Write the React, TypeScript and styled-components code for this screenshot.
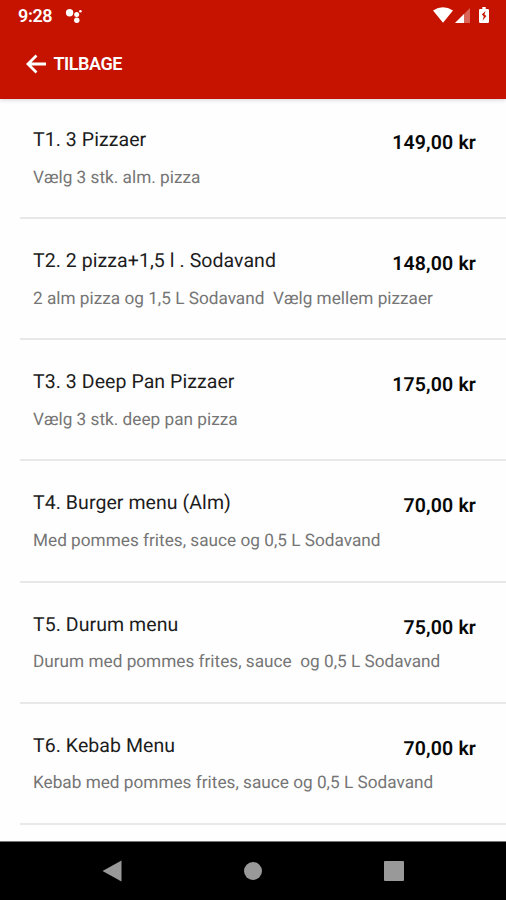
import React from "react";
import styled, { createGlobalStyle } from "styled-components";

const GlobalStyle = createGlobalStyle`
  * { box-sizing: border-box; }
  html, body { margin: 0; padding: 0; background: #fff; }
  body {
    font-family: Roboto, "Liberation Sans", sans-serif;
    text-rendering: geometricPrecision;
    overflow: hidden;
  }
`;

const Screen = styled.div`
  width: 506px;
  height: 900px;
  display: flex;
  flex-direction: column;
  background: #fefefe;
  overflow: hidden;
`;

const Header = styled.header`
  flex: none;
  height: 99px;
  background: #c51300;
  color: #fff;
  box-shadow: 0 1px 4px rgba(60, 60, 110, 0.22);
`;

const StatusBar = styled.div`
  height: 32px;
  display: flex;
  align-items: center;
  padding: 0 16px 0 18px;
`;

const Clock = styled.span`
  font-size: 18px;
  line-height: 32px;
  font-weight: 600;
  letter-spacing: -0.4px;
  width: 47px;
  padding-top: 2px;
`;

const StatusIcons = styled.div`
  display: flex;
  margin-left: auto;
`;

const BackButton = styled.button`
  display: flex;
  align-items: center;
  gap: 7.5px;
  height: 64px;
  padding: 0 0 0 26px;
  border: 0;
  background: none;
  color: inherit;
  font: 600 18px/64px Roboto, sans-serif;
  letter-spacing: -0.45px;
`;

const Menu = styled.ul`
  flex: 1;
  min-height: 0;
  margin: 0;
  padding: 0 0 0 20px;
  list-style: none;
`;

const Item = styled.li`
  height: 121.2px;
  padding: 28px 30px 0 13px;
  display: flex;
  justify-content: space-between;
  border-bottom: 2px solid #e8e8e8;
  white-space: nowrap;

  &:first-child { height: 120px; padding-top: 27px; }
`;

const Details = styled.div`
  display: flex;
  flex-direction: column;
  width: 0;
  white-space: pre;
`;

const Title = styled.span`
  font-size: 19.5px;
  line-height: 28px;
  letter-spacing: 0.07px;
  color: #1c1c1c;
`;

const Description = styled.span`
  margin-top: 11.6px;
  font-size: 17.2px;
  line-height: 24px;
  letter-spacing: 0.01px;
  color: #757575;
`;

const Price = styled.span`
  margin-top: 3px;
  font-size: 19.5px;
  line-height: 28px;
  font-weight: 600;
  letter-spacing: 0.15px;
  color: #080808;
`;

const NavBar = styled.nav`
  flex: none;
  height: 59px;
  border-top: 1px solid #777;
  background: #000;
  display: flex;
  justify-content: space-between;
  align-items: center;
  padding: 0 102px;
`;

const items = [
  { title: "T1. 3 Pizzaer", text: "Vælg 3 stk. alm. pizza", price: "149,00 kr" },
  { title: "T2. 2 pizza+1,5 l . Sodavand", text: "2 alm pizza og 1,5 L Sodavand  Vælg mellem pizzaer", price: "148,00 kr" },
  { title: "T3. 3 Deep Pan Pizzaer", text: "Vælg 3 stk. deep pan pizza", price: "175,00 kr" },
  { title: "T4. Burger menu (Alm)", text: "Med pommes frites, sauce og 0,5 L Sodavand", price: "70,00 kr" },
  { title: "T5. Durum menu", text: "Durum med pommes frites, sauce  og 0,5 L Sodavand", price: "75,00 kr" },
  { title: "T6. Kebab Menu", text: "Kebab med pommes frites, sauce og 0,5 L Sodavand", price: "70,00 kr" },
];

const AssistantIcon = () => (
  <svg width="18" height="16" viewBox="0 0 18 16" fill="#fff">
    <circle cx="4.6" cy="4.8" r="3.7" />
    <circle cx="11.7" cy="6.5" r="2.5" />
    <circle cx="11.8" cy="12.2" r="2.7" />
    <circle cx="15.4" cy="3.2" r="1.3" />
  </svg>
);

const SignalIcons = () => (
  <svg width="58" height="20" viewBox="0 0 58 20" fill="#fff">
    <path d="M1 4.6Q11 -2.2 21 4.6L11 16.8Z" />
    <path d="M23 17L38 2V17Z" opacity="0.35" />
    <path d="M23 17L32 8V17Z" />
    <path d="M48 3H50.3V1H53.7V3H55.7Q57 3 57 4.3V15.8Q57 17 55.7 17H48.2Q47 17 47 15.8V4.3Q47 3 48 3Z" />
    <path d="M53.6 5L49.8 8.6L51.8 10.2L50.6 14.4L54.4 10L52.4 8.4Z" fill="#c51300" />
  </svg>
);

export default function App() {
  return (
    <Screen>
      <GlobalStyle />
      <Header>
        <StatusBar>
          <Clock>9:28</Clock>
          <AssistantIcon />
          <StatusIcons><SignalIcons /></StatusIcons>
        </StatusBar>
        <BackButton>
          <svg width="20" height="20" viewBox="0 0 20 20" fill="none" stroke="#fff" strokeWidth="2.8">
            <path d="M20 10H2.5M10.5 1.5L2 10L10.5 18.5" />
          </svg>
          TILBAGE
        </BackButton>
      </Header>
      <Menu>
        {items.map((item) => (
          <Item key={item.title}>
            <Details>
              <Title>{item.title}</Title>
              <Description>{item.text}</Description>
            </Details>
            <Price>{item.price}</Price>
          </Item>
        ))}
      </Menu>
      <NavBar>
        <svg width="20" height="22" viewBox="0 0 20 22" fill="#999"><path d="M0.5 11L19.5 0.5V21.5Z" /></svg>
        <svg width="18" height="18" viewBox="0 0 18 18" fill="#999"><circle cx="9" cy="9" r="9" /></svg>
        <svg width="20" height="20" viewBox="0 0 20 20" fill="#999"><rect width="20" height="20" rx="1" /></svg>
      </NavBar>
    </Screen>
  );
}
